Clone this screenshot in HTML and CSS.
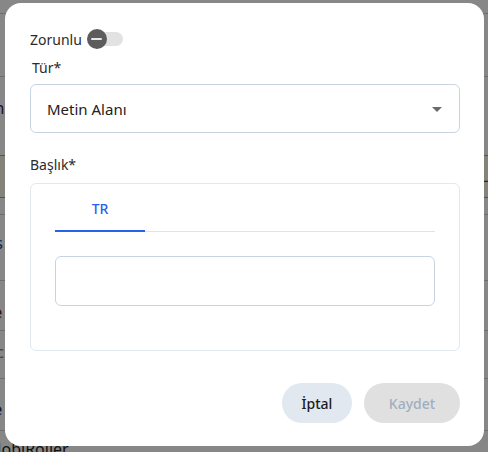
FILE: index.html
```html
<!DOCTYPE html>
<html lang="tr">
<head>
<meta charset="utf-8">
<link rel="stylesheet" href="styles.css">
</head>
<body>
<div class="page">
  <div class="row r1"></div>
  <div class="row r2"></div>
  <div class="row r2b"><span class="bg-text dark">Son</span></div>
  <div class="row warn"><span class="bg-text brown">L</span></div>
  <div class="row r3"></div>
  <div class="row r4"><span class="bg-text blue">Pos<br>os</span></div>
  <div class="row r5"><span class="bg-text red">Ale</span></div>
  <div class="row r6"><span class="bg-text light">Ac</span></div>
  <div class="row r7"><span class="bg-text dark">Ale</span></div>
  <div class="row r8"><span class="bg-text ink">MobiRoller</span></div>
</div>

<div class="overlay">
  <div class="modal">
    <div class="toggle-row">
      <span class="label">Zorunlu</span>
      <span class="switch">
        <span class="track"></span>
        <span class="knob"><span class="dash"></span></span>
      </span>
    </div>

    <div class="field">
      <label class="label">Tür*</label>
      <div class="select">
        <span>Metin Alanı</span>
        <svg class="caret" width="10" height="5" viewBox="0 0 10 5"><path d="M0 0h10L5 5z" fill="#6b6b6b"/></svg>
      </div>
    </div>

    <div class="field">
      <label class="label">Başlık*</label>
      <div class="card">
        <div class="tabs">
          <div class="tab active">TR</div>
        </div>
        <div class="input"></div>
      </div>
    </div>

    <div class="actions">
      <button class="btn cancel">İptal</button>
      <button class="btn save">Kaydet</button>
    </div>
  </div>
</div>
</body>
</html>
```

FILE: styles.css
```css
* { box-sizing: border-box; }
html, body { margin: 0; padding: 0; }
body {
  font-family: "Noto Sans", "Liberation Sans", sans-serif;
  background: #fff;
  width: 488px;
  height: 452px;
  overflow: hidden;
}

.page { display: flex; flex-direction: column; }
.row {
  border-bottom: 1px solid #d0d0d0;
  font-size: 16px;
  flex: none;
}
.r1 { height: 14px; }
.r2 { height: 63px; }
.r2b { height: 78px; border-bottom: 0; }
.warn { height: 43px; background: #fbf6e6; border-top: 1px solid #c9a227; border-bottom: 1px solid #c9a227; }
.r3 { height: 17px; }
.r4 { height: 66px; }
.r5 { height: 50px; }
.r6 { height: 48px; }
.r7 { height: 52px; }
.r8 { height: 30px; border-bottom: 0; }

.bg-text { display: block; line-height: 20px; white-space: nowrap; }
.r2b .bg-text { margin-top: 21px; margin-left: -24px; }
.warn .bg-text { margin-left: 480px; margin-top: 10px; }
.r4 .bg-text { margin-top: 17px; margin-left: -24px; line-height: 23px; }
.r5 .bg-text { margin-top: 21px; margin-left: -21px; }
.r6 .bg-text { margin-top: 11px; margin-left: -14px; }
.r7 .bg-text { margin-top: 20px; margin-left: -21px; }
.r8 .bg-text { margin-top: 8px; margin-left: -13px; }
.dark { color: #1e2a5a; }
.blue { color: #1e3a8a; }
.red { color: #5a1e2a; }
.brown { color: #7a3b0c; }
.light { color: #888; }
.ink { color: #222; }

.overlay {
  position: fixed;
  inset: 0;
  background: rgba(0, 0, 0, 0.47);
}

.modal {
  position: absolute;
  left: 5px;
  top: 3px;
  width: 479px;
  height: 443px;
  background: #fff;
  border-radius: 16px;
  padding: 24px 24px 23px 25px;
  display: flex;
  flex-direction: column;
  color: #222;
}

.label {
  font-size: 14px;
  color: #2b2b2b;
}

.toggle-row {
  display: flex;
  align-items: center;
  height: 24px;
  gap: 5px;
}
.switch {
  position: relative;
  width: 36px;
  height: 20px;
  display: inline-block;
}
.track {
  position: absolute;
  left: 4px;
  top: 3px;
  width: 32px;
  height: 14px;
  border-radius: 7px;
  background: #e2e2e2;
}
.knob {
  position: absolute;
  left: 0;
  top: 0;
  width: 20px;
  height: 20px;
  border-radius: 50%;
  background: #5c5c5c;
  display: flex;
  align-items: center;
  justify-content: center;
}
.dash { width: 11px; height: 2px; background: #e8e8e8; border-radius: 1px; }

.field { display: flex; flex-direction: column; }
.field .label { line-height: 20px; margin-top: 7px; margin-bottom: 6px; padding-left: 2px; }
.field + .field .label { margin-top: 22px; padding-left: 0; margin-bottom: 8px; }

.select {
  height: 49px;
  border: 1px solid #c9d4e2;
  border-radius: 6px;
  display: flex;
  align-items: center;
  justify-content: space-between;
  padding: 0 17px 0 16px;
  font-size: 15px;
  color: #222;
}
.caret { margin-top: 1px; }

.card {
  height: 168px;
  border: 1px solid #e2e8f0;
  border-radius: 6px;
  padding: 0 24px;
}
.tabs {
  display: flex;
  border-bottom: 1px solid #dfe4ec;
  height: 48px;
}
.tab {
  width: 90px;
  text-align: center;
  font-size: 14px;
  font-weight: 500;
  line-height: 50px;
  color: #2563eb;
  border-bottom: 2px solid #2563eb;
  margin-bottom: -1px;
}
.input {
  margin-top: 24px;
  height: 50px;
  border: 1px solid #c9d4e2;
  border-radius: 6px;
}

.actions {
  margin-top: auto;
  display: flex;
  justify-content: flex-end;
  gap: 12px;
}
.btn {
  font-family: inherit;
  font-size: 14px;
  border: 0;
  height: 40px;
  border-radius: 20px;
  padding: 0;
}
.cancel { width: 70px; background: #e2e8f0; color: #1a1a1a; font-weight: 500; }
.save { width: 96px; background: #e0e0e0; color: #a0aec0; font-weight: 500; }
```
